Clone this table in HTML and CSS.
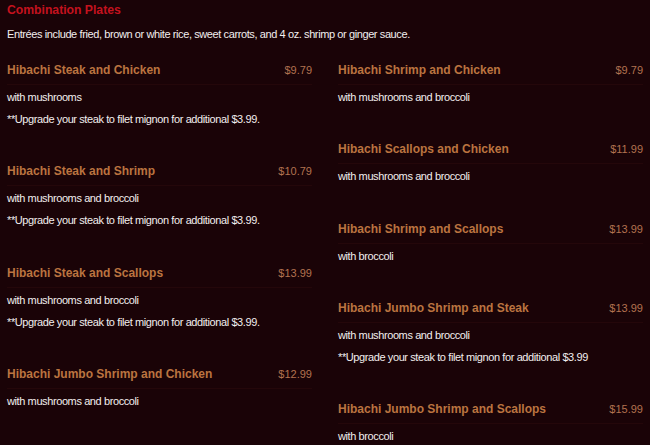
FILE: index.html
```html
<!DOCTYPE html>
<html>
<head>
<meta charset="utf-8">
<link rel="stylesheet" href="styles.css">
</head>
<body>
<div class="menu">
  <h2 class="heading">Combination Plates</h2>
  <p class="intro">Entrées include fried, brown or white rice, sweet carrots, and 4 oz. shrimp or ginger sauce.</p>
  <div class="columns">
    <div class="col">
      <div class="item">
        <div class="item-head"><span class="name">Hibachi Steak and Chicken</span><span class="price">$9.79</span></div>
        <p class="desc">with mushrooms</p>
        <p class="desc">**Upgrade your steak to filet mignon for additional $3.99.</p>
      </div>
      <div class="item">
        <div class="item-head"><span class="name">Hibachi Steak and Shrimp</span><span class="price">$10.79</span></div>
        <p class="desc">with mushrooms and broccoli</p>
        <p class="desc">**Upgrade your steak to filet mignon for additional $3.99.</p>
      </div>
      <div class="item">
        <div class="item-head"><span class="name">Hibachi Steak and Scallops</span><span class="price">$13.99</span></div>
        <p class="desc">with mushrooms and broccoli</p>
        <p class="desc">**Upgrade your steak to filet mignon for additional $3.99.</p>
      </div>
      <div class="item">
        <div class="item-head"><span class="name">Hibachi Jumbo Shrimp and Chicken</span><span class="price">$12.99</span></div>
        <p class="desc">with mushrooms and broccoli</p>
      </div>
    </div>
    <div class="col">
      <div class="item">
        <div class="item-head"><span class="name">Hibachi Shrimp and Chicken</span><span class="price">$9.79</span></div>
        <p class="desc">with mushrooms and broccoli</p>
      </div>
      <div class="item">
        <div class="item-head"><span class="name">Hibachi Scallops and Chicken</span><span class="price">$11.99</span></div>
        <p class="desc">with mushrooms and broccoli</p>
      </div>
      <div class="item">
        <div class="item-head"><span class="name">Hibachi Shrimp and Scallops</span><span class="price">$13.99</span></div>
        <p class="desc">with broccoli</p>
      </div>
      <div class="item">
        <div class="item-head"><span class="name">Hibachi Jumbo Shrimp and Steak</span><span class="price">$13.99</span></div>
        <p class="desc">with mushrooms and broccoli</p>
        <p class="desc">**Upgrade your steak to filet mignon for additional $3.99</p>
      </div>
      <div class="item">
        <div class="item-head"><span class="name">Hibachi Jumbo Shrimp and Scallops</span><span class="price">$15.99</span></div>
        <p class="desc">with broccoli</p>
      </div>
    </div>
  </div>
</div>
</body>
</html>
```

FILE: styles.css
```css
html, body {
  margin: 0;
  padding: 0;
  background: #1a0307;
  overflow: hidden;
}
.menu {
  padding: 2px 7px 0 7px;
  font-family: "Liberation Sans", Arial, sans-serif;
  color: #f2eeee;
}
.heading {
  margin: 0;
  font-size: 12.2px;
  line-height: 16px;
  font-weight: bold;
  color: #c4121e;
}
.intro {
  margin: 8px 0 0 0;
  font-size: 11px;
  line-height: 16px;
  letter-spacing: -0.4px;
}
.columns {
  display: grid;
  grid-template-columns: 1fr 1fr;
  column-gap: 26px;
  margin-top: 20px;
}
.item {
  margin-bottom: 33.33px;
}
.item-head {
  display: flex;
  justify-content: space-between;
  align-items: baseline;
  padding-bottom: 6px;
  border-bottom: 1px solid #24070a;
  line-height: 16px;
}
.name {
  font-size: 12px;
  font-weight: bold;
  color: #bb7440;
}
.price {
  font-size: 11px;
  color: #b27250;
}
.desc {
  margin: 0;
  font-size: 11px;
  line-height: 22px;
  letter-spacing: -0.4px;
}
.item-head + .desc {
  margin-top: 1px;
}
```
